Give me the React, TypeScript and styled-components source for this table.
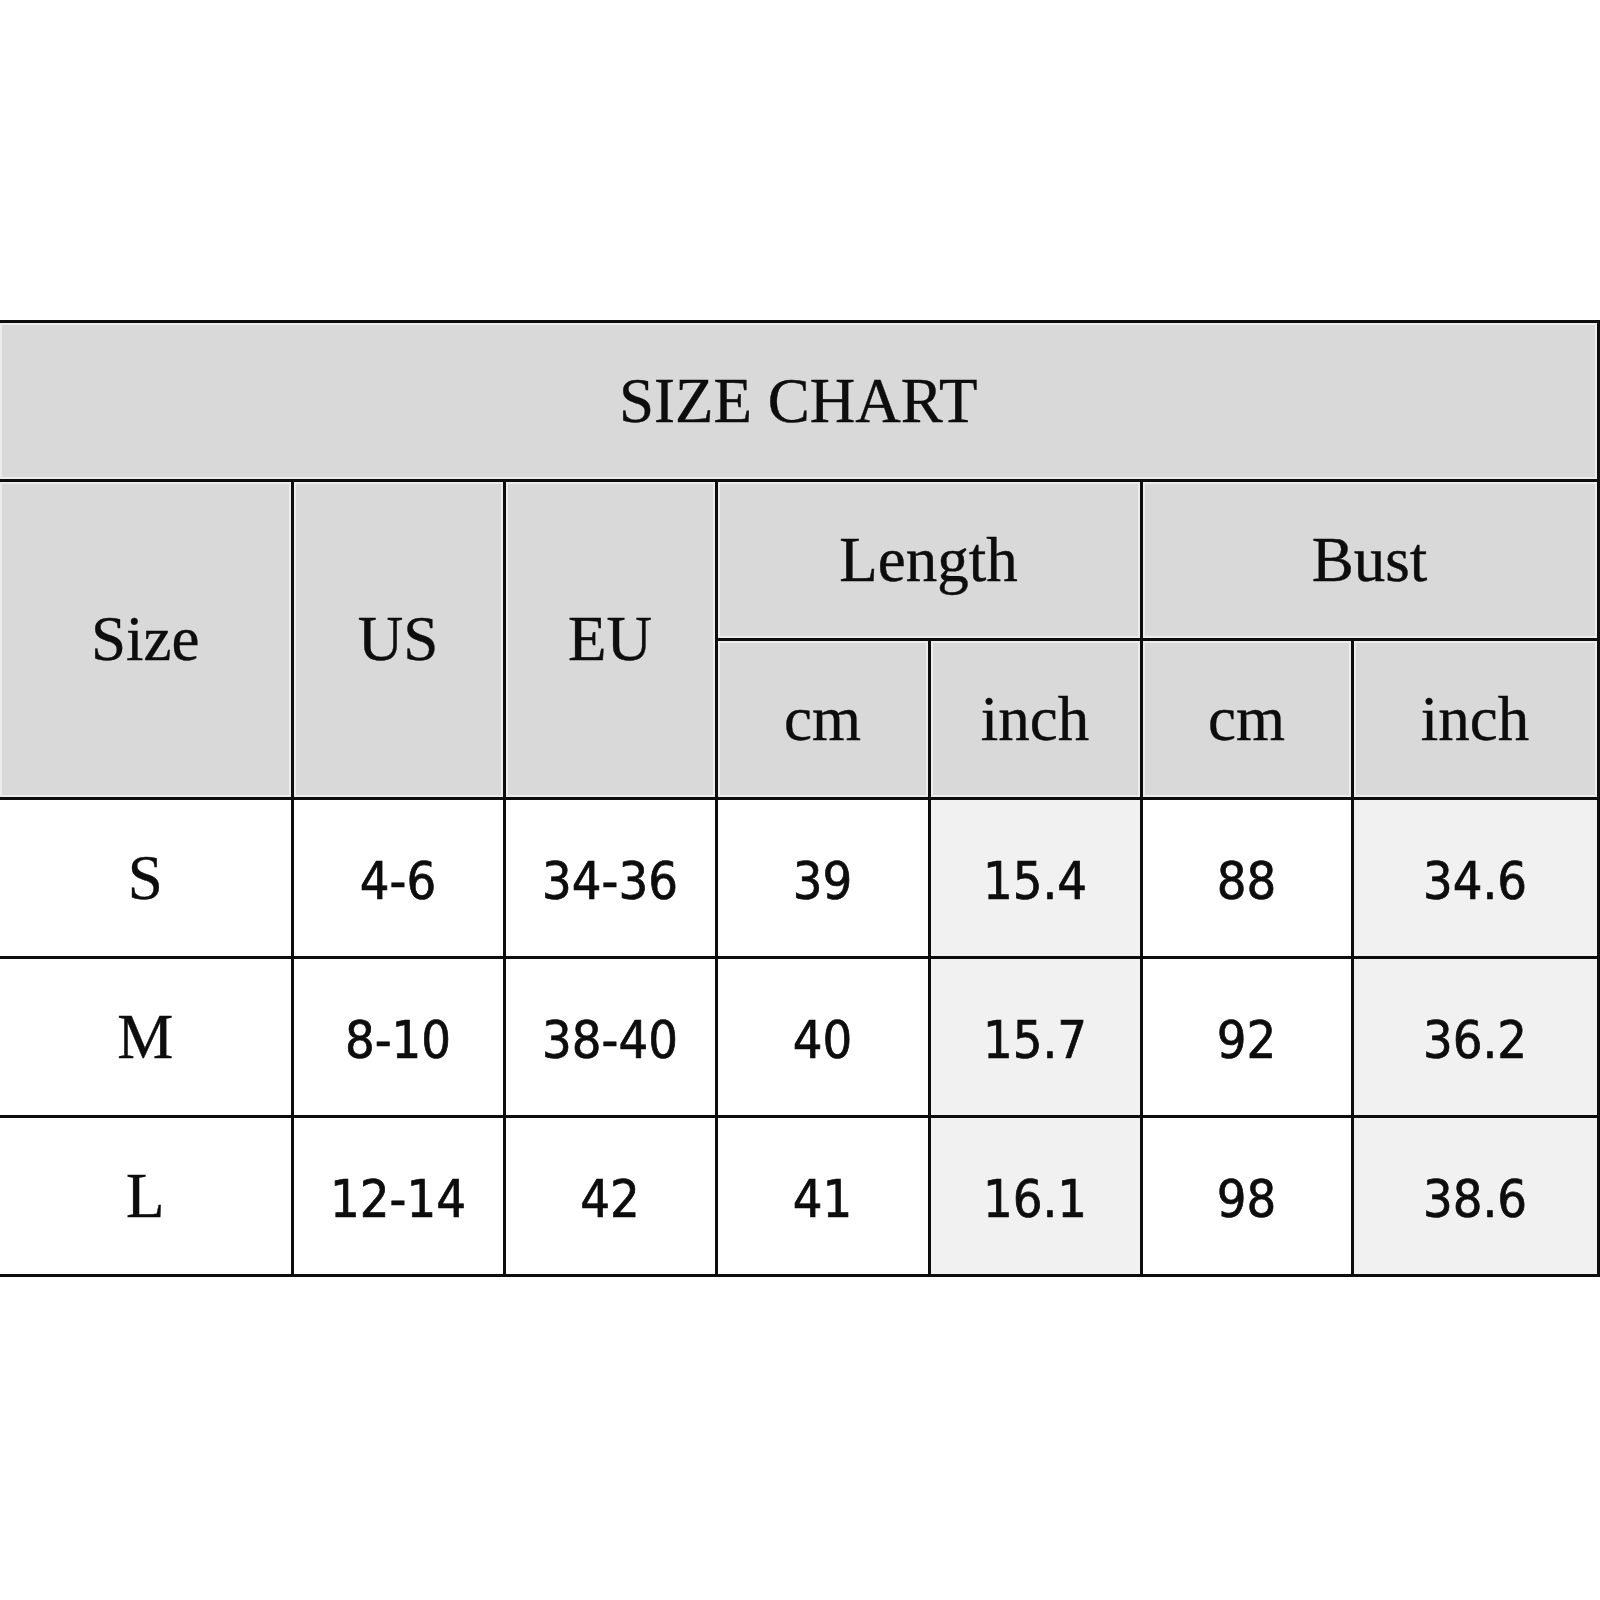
import React from "react";
import styled, { createGlobalStyle } from "styled-components";

const GlobalStyle = createGlobalStyle`
  html, body {
    margin: 0;
    padding: 0;
    background: #ffffff;
  }
  body {
    width: 1600px;
    height: 1600px;
    overflow: hidden;
  }
`;

type Row = {
  size: string;
  us: string;
  eu: string;
  lengthCm: string;
  lengthIn: string;
  bustCm: string;
  bustIn: string;
};

const rows: Row[] = [
  { size: "S", us: "4-6", eu: "34-36", lengthCm: "39", lengthIn: "15.4", bustCm: "88", bustIn: "34.6" },
  { size: "M", us: "8-10", eu: "38-40", lengthCm: "40", lengthIn: "15.7", bustCm: "92", bustIn: "36.2" },
  { size: "L", us: "12-14", eu: "42", lengthCm: "41", lengthIn: "16.1", bustCm: "98", bustIn: "38.6" },
];

const widths = [292, 212, 212, 213, 212, 211, 246];

const App: React.FC = () => {
  return (
    <Page>
      <GlobalStyle />
      <Chart>
        <colgroup>
          {widths.map((w, i) => (
            <col key={i} style={{ width: w }} />
          ))}
        </colgroup>
        <thead>
          <Tr>
            <TitleCell colSpan={7}>SIZE CHART</TitleCell>
          </Tr>
          <Tr>
            <HeadCell rowSpan={2}>Size</HeadCell>
            <HeadCell rowSpan={2}>US</HeadCell>
            <HeadCell rowSpan={2}>EU</HeadCell>
            <HeadCell colSpan={2}>Length</HeadCell>
            <HeadCell colSpan={2}>Bust</HeadCell>
          </Tr>
          <Tr>
            <HeadCell>cm</HeadCell>
            <HeadCell>inch</HeadCell>
            <HeadCell>cm</HeadCell>
            <HeadCell>inch</HeadCell>
          </Tr>
        </thead>
        <tbody>
          {rows.map((r) => (
            <Tr key={r.size}>
              <SizeCell>{r.size}</SizeCell>
              <Cell>{r.us}</Cell>
              <Cell>{r.eu}</Cell>
              <Cell>{r.lengthCm}</Cell>
              <Cell $shaded>{r.lengthIn}</Cell>
              <Cell>{r.bustCm}</Cell>
              <Cell $shaded>{r.bustIn}</Cell>
            </Tr>
          ))}
        </tbody>
      </Chart>
    </Page>
  );
};

export default App;

const Page = styled.div`
  width: 1600px;
  height: 1600px;
  padding-top: 320px;
  box-sizing: border-box;
`;

const Chart = styled.table`
  width: 1598px;
  table-layout: fixed;
  border-collapse: collapse;
  color: #0d0d0d;
`;

const Tr = styled.tr`
  height: 159px;
`;

const BaseCell = `
  border: 3px solid #0d0d0d;
  padding: 0;
  text-align: center;
  vertical-align: middle;
  &:first-child {
    border-left: none;
  }
`;

const TitleCell = styled.th`
  ${BaseCell}
  background: #d9d9d9;
  box-shadow: inset 0 0 0 2px #ececec;
  font-family: "Liberation Serif", "Times New Roman", serif;
  font-size: 63px;
  font-weight: normal;
  -webkit-text-stroke: 0.4px #0d0d0d;
`;

const HeadCell = styled.th`
  ${BaseCell}
  background: #d9d9d9;
  box-shadow: inset 0 0 0 2px #ececec;
  font-family: "Liberation Serif", "Times New Roman", serif;
  font-size: 63px;
  font-weight: normal;
  -webkit-text-stroke: 0.4px #0d0d0d;
`;

const SizeCell = styled.td`
  ${BaseCell}
  background: #ffffff;
  font-family: "Liberation Serif", "Times New Roman", serif;
  font-size: 63px;
  -webkit-text-stroke: 0.4px #0d0d0d;
`;

const Cell = styled.td<{ $shaded?: boolean }>`
  ${BaseCell}
  background: ${(p) => (p.$shaded ? "#f1f1f1" : "#ffffff")};
  font-family: "DejaVu Sans Condensed", "DejaVu Sans", sans-serif;
  font-stretch: semi-condensed;
  font-size: 52px;
  padding-top: 6px;
  -webkit-text-stroke: 0.7px #0d0d0d;
`;
